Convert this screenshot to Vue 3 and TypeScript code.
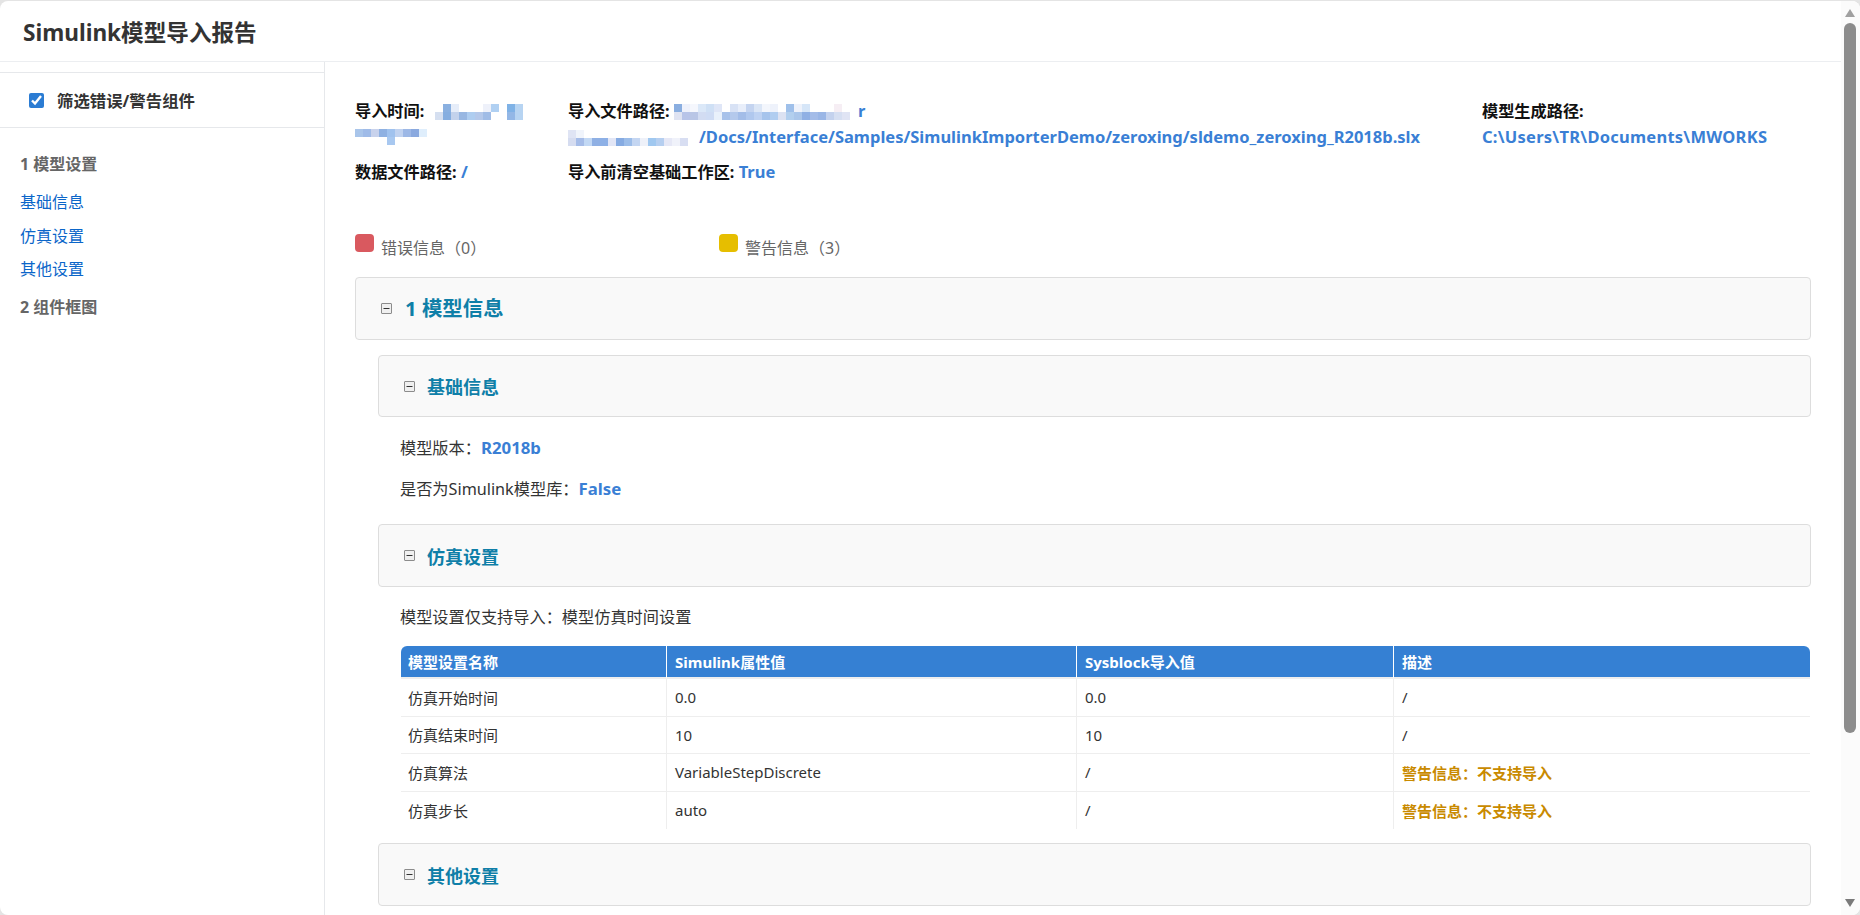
<script setup lang="ts">
interface Row {
  name: string
  attr: string
  imported: string
  desc: string
  warn?: boolean
}

interface Mosaic {
  width: number
  height: number
  rows: string[][]
}

const rows: Row[] = [
  { name: '仿真开始时间', attr: '0.0', imported: '0.0', desc: '/' },
  { name: '仿真结束时间', attr: '10', imported: '10', desc: '/' },
  { name: '仿真算法', attr: 'VariableStepDiscrete', imported: '/', desc: '警告信息：不支持导入', warn: true },
  { name: '仿真步长', attr: 'auto', imported: '/', desc: '警告信息：不支持导入', warn: true },
]

// redacted values in the report, drawn as colour cells (8px each, '' = empty)
function mosaic(cells: string[][]): Mosaic {
  return { width: cells[0].length * 8, height: cells.length * 8, rows: cells }
}

const timeA = mosaic([
  ['', '#8ab0e0', '#e6edf9', '', '', '', '#eef1fa', '#b0d0f2', '', '#7fb2e6', '#b7d4f2'],
  ['#d5dff0', '#86aee0', '#c3d2ec', '#98b7e2', '#aecdf0', '#b4c8ea', '#a0bce6', '', '', '#93b7e6', '#b7d4f2'],
])
const timeB = mosaic([
  ['#a9c5ea', '#9fbbe8', '#c8d2ec', '#8fb1e2', '#a0c2ee', '#c0d2f0', '#9db8e6', '#8aa9df', '#dfeefc'],
  ['', '', '', '', '#a8c8f0', '', '', '', ''],
])
const pathA = mosaic([
  ['#8aaee0', '#eef1fb', '#f5f7fd', '#dbe8f8', '#cfe0f5', '#dfe6f7', '', '#d8e2f5', '#e8eefa', '#c4d4f0', '#dbe6f6', '#f3f6fc', '#eef2fb', '', '#9fc0ea', '#eef2fb', '#d6e6f8', '', '', '', '#f6eef4', '', ''],
  ['#dfe3f2', '#b8c4e8', '#b9c6e6', '#d2dcf2', '#cfdcf4', '#e9f1fb', '#a8c2ea', '#b4c9ec', '#a3bde8', '#b0c8ee', '#bed2f2', '#a6c4ec', '#b0cdf0', '#dce2f2', '#b2cfee', '#aac6ea', '#8fb0e4', '#a4bce8', '#9ab6e6', '#c4d2ee', '#d6dff2', '#e0e4f4', ''],
])
const pathB = mosaic([
  ['#dfe4f4', '#f0f4fb', '', '', '', '', '', '', '', '', '', '', '', '', '', ''],
  ['#d5dcf0', '#a5bce8', '#c2d8f4', '#8fb0e4', '#8db0e6', '#e2e6f6', '#86abe2', '#9cbde9', '#c4d6f2', '#eef1f9', '#a0c8f0', '#b6cff0', '#e6e8f6', '#f0f2fa', '#d8def2', ''],
])
</script>

<template>
  <div class="window">
    <div class="page">
      <header class="top">Simulink模型导入报告</header>
      <div class="body">
        <aside class="side">
          <label class="filter">
            <input type="checkbox" checked />
            <span>筛选错误/警告组件</span>
          </label>
          <nav class="nav">
            <div class="nav-head">1 模型设置</div>
            <a class="nav-link">基础信息</a>
            <a class="nav-link">仿真设置</a>
            <a class="nav-link">其他设置</a>
            <div class="nav-head">2 组件框图</div>
          </nav>
        </aside>

        <main class="main">
          <section class="meta">
            <div class="field">
              导入时间:
              <svg class="cells cells-time" :width="timeA.width" :height="timeA.height">
                <template v-for="(cells, y) in timeA.rows" :key="y">
                  <rect v-for="(c, x) in cells" :key="x" :x="x * 8" :y="y * 8" width="8" height="8" :fill="c || 'none'" />
                </template>
              </svg>
              <svg class="cells cells-block" :width="timeB.width" :height="timeB.height">
                <template v-for="(cells, y) in timeB.rows" :key="y">
                  <rect v-for="(c, x) in cells" :key="x" :x="x * 8" :y="y * 8" width="8" height="8" :fill="c || 'none'" />
                </template>
              </svg>
            </div>
            <div class="field">
              导入文件路径:
              <svg class="cells" :width="pathA.width" :height="pathA.height">
                <template v-for="(cells, y) in pathA.rows" :key="y">
                  <rect v-for="(c, x) in cells" :key="x" :x="x * 8" :y="y * 8" width="8" height="8" :fill="c || 'none'" />
                </template>
              </svg><span class="val">r</span>
              <span class="val-block">
                <svg class="cells cells-path" :width="pathB.width" :height="pathB.height">
                  <template v-for="(cells, y) in pathB.rows" :key="y">
                    <rect v-for="(c, x) in cells" :key="x" :x="x * 8" :y="y * 8" width="8" height="8" :fill="c || 'none'" />
                  </template>
                </svg><span class="val">/Docs/Interface/Samples/SimulinkImporterDemo/zeroxing/sldemo_zeroxing_R2018b.slx</span>
              </span>
            </div>
            <div class="field">
              模型生成路径:
              <span class="val val-block val-wide">C:\Users\TR\Documents\MWORKS</span>
            </div>
            <div class="field">数据文件路径: <span class="val">/</span></div>
            <div class="field">导入前清空基础工作区: <span class="val">True</span></div>
          </section>

          <section class="legend">
            <div class="legend-item"><i class="dot dot-err"></i><span>错误信息（0）</span></div>
            <div class="legend-item"><i class="dot dot-warn"></i><span>警告信息（3）</span></div>
          </section>

          <div class="panel panel-top">
            <svg class="fold" viewBox="0 0 11 11"><rect x=".5" y=".5" width="10" height="10" rx=".5" fill="#f0f0f0" stroke="#8c8c8c" /><path d="M2.5 5.5h6" stroke="#333" /></svg>
            <h2>1 模型信息</h2>
          </div>

          <div class="sub">
            <div class="panel">
              <svg class="fold" viewBox="0 0 11 11"><rect x=".5" y=".5" width="10" height="10" rx=".5" fill="#f0f0f0" stroke="#8c8c8c" /><path d="M2.5 5.5h6" stroke="#333" /></svg>
              <h3>基础信息</h3>
            </div>
            <p class="line line-first">模型版本：<b>R2018b</b></p>
            <p class="line line-next">是否为Simulink模型库：<b>False</b></p>

            <div class="panel panel-sim">
              <svg class="fold" viewBox="0 0 11 11"><rect x=".5" y=".5" width="10" height="10" rx=".5" fill="#f0f0f0" stroke="#8c8c8c" /><path d="M2.5 5.5h6" stroke="#333" /></svg>
              <h3>仿真设置</h3>
            </div>
            <p class="line line-note">模型设置仅支持导入：模型仿真时间设置</p>

            <table class="grid">
              <colgroup>
                <col class="c1" /><col class="c2" /><col class="c3" /><col />
              </colgroup>
              <thead>
                <tr>
                  <th>模型设置名称</th>
                  <th>Simulink属性值</th>
                  <th>Sysblock导入值</th>
                  <th>描述</th>
                </tr>
              </thead>
              <tbody>
                <tr v-for="row in rows" :key="row.name">
                  <td>{{ row.name }}</td>
                  <td>{{ row.attr }}</td>
                  <td>{{ row.imported }}</td>
                  <td :class="{ warn: row.warn }">{{ row.desc }}</td>
                </tr>
              </tbody>
            </table>

            <div class="panel panel-other">
              <svg class="fold" viewBox="0 0 11 11"><rect x=".5" y=".5" width="10" height="10" rx=".5" fill="#f0f0f0" stroke="#8c8c8c" /><path d="M2.5 5.5h6" stroke="#333" /></svg>
              <h3>其他设置</h3>
            </div>
          </div>
        </main>
      </div>
    </div>

    <div class="scrollbar">
      <svg class="arrow" viewBox="0 0 10 8"><path d="M5 0 10 8H0z" fill="#a0a0a0" /></svg>
      <div class="track"><div class="thumb"></div></div>
      <svg class="arrow" viewBox="0 0 10 8"><path d="M0 0h10L5 8z" fill="#7a7a7a" /></svg>
    </div>
  </div>
</template>

<style scoped>
.window {
  display: flex;
  width: 1860px;
  height: 914px;
  margin-top: 1px;
  background: #fff;
  border-radius: 8px;
  overflow: hidden;
  font-family: "Noto Sans", "Noto Sans CJK SC", sans-serif;
}

.page {
  flex: 1;
  min-width: 0;
  display: flex;
  flex-direction: column;
}

.top {
  height: 60px;
  flex: none;
  padding-left: 23px;
  display: flex;
  align-items: center;
  border-bottom: 1px solid #eceef1;
  font-size: 22.6px;
  font-weight: 700;
  color: #333;
}

.body {
  flex: 1;
  min-height: 0;
  display: flex;
}

.side {
  width: 324px;
  flex: none;
  border-right: 1px solid #e6e8eb;
}

.filter {
  margin-top: 10px;
  height: 54px;
  display: flex;
  align-items: center;
  gap: 13px;
  padding-left: 29px;
  border-top: 1px solid #e6e8eb;
  border-bottom: 1px solid #e6e8eb;
  font-size: 16.4px;
  font-weight: 700;
  color: #333;
}

.filter input {
  width: 15px;
  height: 15px;
  margin: 0;
  accent-color: #2b7cd3;
}

.nav {
  display: flex;
  flex-direction: column;
  padding: 24px 0 0 20px;
  font-size: 16px;
}

.nav-head {
  height: 24px;
  line-height: 24px;
  font-weight: 700;
  color: #666;
  margin-bottom: 14px;
}

.nav-link {
  height: 24px;
  line-height: 24px;
  color: #0b66c9;
  margin-bottom: 9.5px;
}

.nav-link:last-of-type {
  margin-bottom: 13.5px;
}

.main {
  flex: 1;
  min-width: 0;
  overflow: hidden;
  padding: 0 30px;
}

.meta {
  display: grid;
  grid-template-columns: 213px 914px 1fr;
  align-content: start;
  row-gap: 9px;
  padding-top: 36px;
  height: 159px;
  box-sizing: border-box;
  font-size: 16.2px;
}

.field {
  line-height: 26px;
  font-weight: 700;
  color: #111;
}

.val {
  color: #3a7fd5;
  font-size: 16.5px;
}

.val-wide {
  letter-spacing: 0.25px;
}

.val-block {
  display: block;
  height: 26px;
}

.cells {
  vertical-align: -3px;
  filter: blur(0.6px);
}

.cells-time {
  margin-left: 6px;
}

.cells-block {
  display: block;
  margin-top: 5px;
}

.cells-path {
  margin-right: 3px;
}

.legend {
  display: flex;
  height: 56px;
  box-sizing: border-box;
  padding-top: 13px;
  font-size: 16px;
  color: #666;
}

.legend-item {
  width: 364px;
  display: flex;
  align-items: flex-start;
  gap: 7px;
}

.legend-item span {
  padding-top: 2px;
  line-height: 24px;
}

.dot {
  width: 19px;
  height: 18px;
  border-radius: 4px;
  flex: none;
}

.dot-err {
  background: #d9595f;
}

.dot-warn {
  background: #e6be00;
}

.panel {
  height: 62px;
  box-sizing: border-box;
  display: flex;
  align-items: center;
  padding-left: 25px;
  gap: 12px;
  background: #f9f9f9;
  border: 1px solid #ddd;
  border-radius: 4px;
}

.panel-top {
  height: 63px;
  gap: 13px;
}

.panel h2 {
  margin: 0;
  padding-bottom: 3px;
  font-size: 20.4px;
  font-weight: 700;
  color: #0f7fa8;
}

.panel h3 {
  margin: 0;
  font-size: 18px;
  font-weight: 700;
  color: #0f7fa8;
}

.fold {
  width: 11px;
  height: 11px;
  flex: none;
}

.sub {
  padding: 15px 0 0 23px;
}

.line {
  margin: 0;
  padding-left: 22px;
  font-size: 16.2px;
  line-height: 24px;
  color: #333;
}

.line b {
  color: #3a7fd5;
  font-size: 16.8px;
}

.line-first {
  margin-top: 19px;
}

.line-next {
  margin-top: 17px;
}

.panel-sim {
  margin-top: 23px;
  height: 63px;
}

.line-note {
  margin-top: 18px;
}

.grid {
  width: 1409px;
  margin: 17px 0 0 23px;
  border-collapse: separate;
  border-spacing: 0;
  table-layout: fixed;
  font-size: 15px;
  color: #333;
}

.c1 { width: 266px; }
.c2 { width: 410px; }
.c3 { width: 317px; }

.grid th {
  height: 33px;
  padding: 0 8px;
  box-sizing: border-box;
  text-align: left;
  background: #3580d3;
  color: #fff;
  font-weight: 700;
  border-right: 1px solid #fff;
  border-bottom: 2px solid #eee;
}

.grid th:first-child {
  padding-left: 7px;
  border-top-left-radius: 6px;
}

.grid th:last-child {
  border-top-right-radius: 6px;
  border-right: none;
}

.grid td {
  height: 37.5px;
  padding: 0 8px;
  box-sizing: border-box;
  border-right: 1px solid #eee;
  border-bottom: 1px solid #eee;
}

.grid td:first-child {
  padding-left: 7px;
}

.grid td:last-child {
  border-right: none;
}

.grid tr:last-child td {
  border-bottom: none;
}

.warn {
  color: #c98a00;
  font-weight: 700;
}

.panel-other {
  margin-top: 14px;
  height: 63px;
}

.scrollbar {
  width: 19px;
  flex: none;
  display: flex;
  flex-direction: column;
  align-items: center;
  background: #fbfbfb;
  padding: 8px 2px 8px 0;
  box-sizing: border-box;
}

.arrow {
  width: 10px;
  height: 8px;
  flex: none;
}

.track {
  flex: 1;
  width: 100%;
  padding-top: 6px;
  box-sizing: border-box;
}

.thumb {
  width: 12px;
  height: 710px;
  margin: 0 auto;
  background: #8c8c8c;
  border-radius: 6px;
}
</style>

<style>
body {
  background: #e4e4e4;
}
</style>
